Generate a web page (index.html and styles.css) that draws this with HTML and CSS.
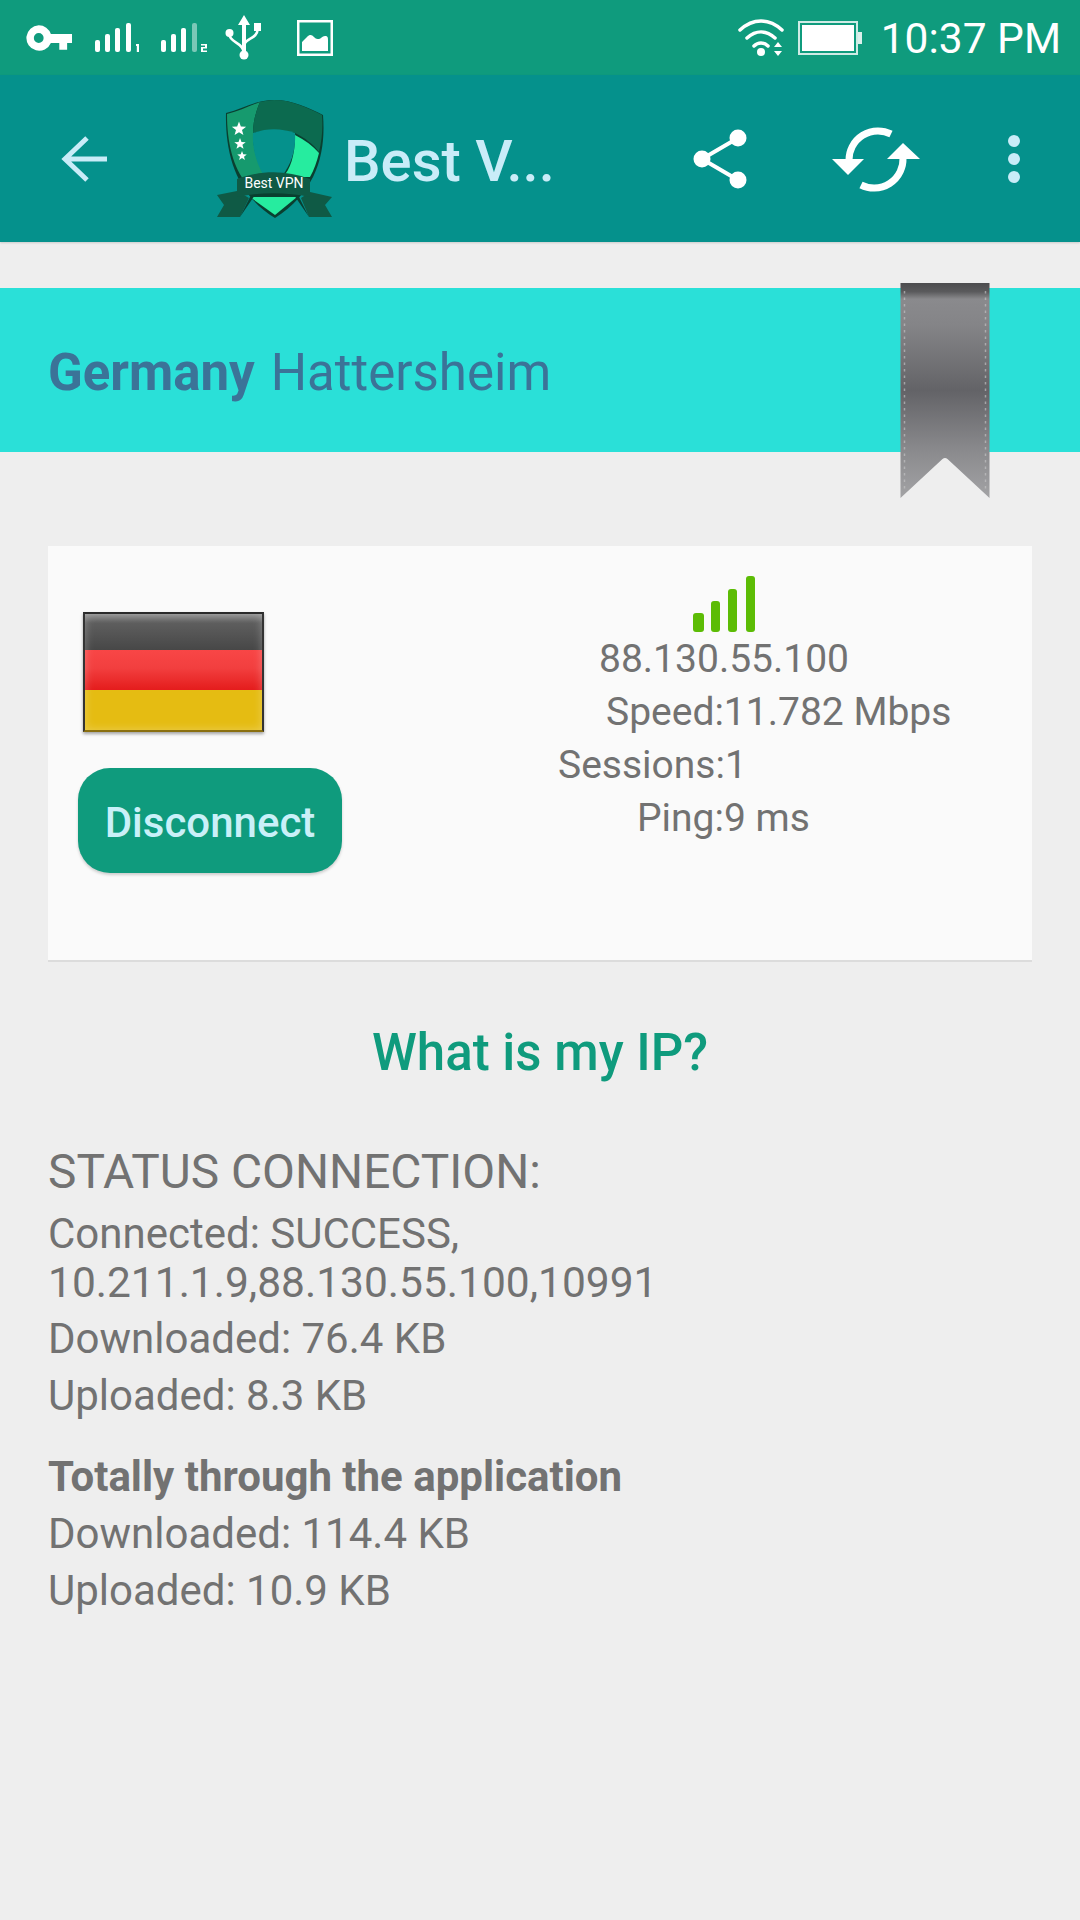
FILE: index.html
```html
<!DOCTYPE html>
<html lang="en">
<head>
<meta charset="utf-8">
<title>Best VPN</title>
<link rel="stylesheet" href="styles.css">
</head>
<body>
<div class="screen">
  <header class="statusbar">
    <svg class="ic-key" viewBox="0 0 48 26"><path fill="#fff" d="M13 0a13 13 0 0 1 12.4 9H47v9h-5v7h-8v-7h-8.600A13 13 0 1 1 13 0zm0 8a5 5 0 1 0 0 10 5 5 0 0 0 0-10z"/></svg>
    <svg class="ic-sig" viewBox="0 0 46 30"><g fill="#fff"><rect x="0" y="17" width="5" height="12" rx="2"/><rect x="10" y="11" width="5" height="18" rx="2"/><rect x="20" y="5" width="5" height="24" rx="2"/><rect x="31" y="0" width="5" height="29" rx="2"/><path d="M41 21h3v8h-2.200v-6H41z"/></g></svg>
    <svg class="ic-sig ic-sig2" viewBox="0 0 46 30"><g fill="#fff"><rect x="0" y="17" width="5" height="12" rx="2"/><rect x="10" y="11" width="5" height="18" rx="2"/><rect x="20" y="5" width="5" height="24" rx="2"/><rect x="31" y="0" width="5" height="29" rx="2" opacity=".45"/><path d="M40 21h6v4.500h-4v2h4V29h-6v-5h4v-1.500h-4z"/></g></svg>
    <svg class="ic-usb" viewBox="0 0 38 46"><g fill="#fff"><path d="M19 0l6 10h-4v26h-4V10h-4z"/><circle cx="19" cy="40" r="4.500"/><circle cx="4.500" cy="18" r="4"/><rect x="29" y="8" width="7" height="8"/></g><g fill="none" stroke="#fff" stroke-width="2.500"><path d="M4.500 20c0 7 14 8 14 17"/><path d="M32.500 15c0 9-13 8-13 15"/></g></svg>
    <svg class="ic-img" viewBox="0 0 36 36"><rect x="1.250" y="1.250" width="33.500" height="33.500" fill="none" stroke="#fff" stroke-width="2.500"/><path fill="#fff" d="M5 31V22l5-5c3-3 5-2 7 0s3 2 5 2 3-3 6-3 3 2 3 4v11z"/></svg>
    <div class="status-right">
      <svg class="ic-wifi" viewBox="0 0 46 38"><g fill="none" stroke="#fff" stroke-width="3.500" stroke-linecap="round"><path d="M2 11c13-12 29-12 42 0"/><path d="M9 19c9-8 19-8 28 0"/><path d="M16 27c4-4 10-4 14 0"/></g><circle cx="23" cy="33" r="4" fill="#fff"/><path fill="#fff" d="M40 23l4 5h-8zM40 37l-4-5h8z"/></svg>
      <svg class="ic-bat" viewBox="0 0 64 34"><rect x="1" y="1" width="58" height="32" fill="none" stroke="#fff" stroke-opacity=".8" stroke-width="2"/><rect x="4" y="4" width="52" height="26" fill="#fff"/><rect x="60" y="11" width="4" height="12" fill="#fff" fill-opacity=".85"/></svg>
      <span class="clock">10:37 PM</span>
    </div>
  </header>

  <nav class="appbar">
    <svg class="ic-back" viewBox="0 0 48 48"><path fill="none" stroke="#c9ecf8" stroke-width="5" d="M47 24H4M27 3L5 24l22 21"/></svg>
    <svg class="logo" viewBox="0 0 115 118">
      <defs><path id="star" d="M0-1L.247-.34.951-.309.4.13.588.809 0 .42-.588.809-.4.13-.951-.309-.247-.34z"/></defs>
      <path fill="#0a3f30" d="M9 13C26 9 38 0 57 0s35 8 49 15c3 38-6 76-48 103C20 95 8 55 9 13z"/>
      <path fill="#169a6e" d="M10 14C22 11 32 6 43 2c-4 9-7 20-7 31 0 16 4 30 12 42L30 84C16 68 10 42 10 14z"/>
      <path fill="#0c6a4f" d="M43 2c5-1 10-2 14-2 18 0 34 8 48 15 1 13 0 25-3 37-6-8-14-14-24-19-13-4-28-4-42 0 0-11 3-22 7-31z"/>
      <path fill="#26ec9f" d="M78 35c10 5 18 11 24 18-2 8-5 17-9 24H66c7-8 12-20 12-42z"/>
      <path fill="#26ec9f" d="M33 97h47L58 115z"/>
      <path fill="#05918c" d="M36 33c14-5 28-5 42 0 1 16-3 30-13 43H47C39 62 35 48 36 33z"/>
      <g fill="#fff">
        <use href="#star" transform="translate(22 29) scale(7.500)"/>
        <use href="#star" transform="translate(23 44) scale(6)"/>
        <use href="#star" transform="translate(25 56) scale(5)"/>
      </g>
      <path fill="#0f5a45" d="M0 95l20-4 12 7-9 19H0l7-12zM115 97l-22-5-9 6 8 19h23l-7-12z"/>
      <path fill="#0a3f30" d="M23 117l10-20 5-2zM92 117l-10-20-5-2z"/>
      <path fill="#0f5a45" d="M20 79c24-9 49-9 73 0v18c-24-5-49-5-73 0z"/>
      <text class="logo-text" x="57" y="88" text-anchor="middle">Best VPN</text>
    </svg>
    <span class="app-title">Best V...</span>
    <svg class="ic-share" viewBox="0 0 54 60"><g fill="#fff"><circle cx="45" cy="9" r="8.500"/><circle cx="9" cy="30" r="8.500"/><circle cx="45" cy="51" r="8.500"/></g><path fill="none" stroke="#fff" stroke-width="4" d="M45 9L9 30l36 21"/></svg>
    <svg class="ic-sync" viewBox="0 0 88 66"><g fill="none" stroke="#fff" stroke-width="7"><path d="M59 8A29 29 0 0 0 17 34"/><path d="M29 59A29 29 0 0 0 71 32"/></g><path fill="#fff" d="M0 33h32L16 49zM55 33h33L71 17z"/></svg>
    <svg class="ic-more" viewBox="0 0 12 48"><g fill="#c9ecf8"><circle cx="6" cy="6" r="6"/><circle cx="6" cy="24" r="6"/><circle cx="6" cy="42" r="6"/></g></svg>
  </nav>

  <main class="content">
    <section class="banner">
      <span class="country">Germany</span> <span class="city">Hattersheim</span>
      <svg class="ribbon" viewBox="0 0 89 215">
        <defs>
          <linearGradient id="rib" x1="0" y1="0" x2="0" y2="1">
            <stop offset="0" stop-color="#4c4c4e"/><stop offset=".04" stop-color="#5a5a5c"/><stop offset=".075" stop-color="#8a8a8d"/><stop offset=".2" stop-color="#848487"/><stop offset=".5" stop-color="#636367"/><stop offset=".78" stop-color="#8a8a8d"/><stop offset="1" stop-color="#a3a3a5"/>
          </linearGradient>
        </defs>
        <path fill="url(#rib)" d="M0 0h89v215L47 176q-2.500-2-5 0L0 215z"/>
        <path fill="none" stroke="#c4c4c6" stroke-opacity=".65" stroke-width="1.500" stroke-dasharray="2.500 4" d="M4 8v198M85 8v198"/>
      </svg>
    </section>

    <section class="card">
      <div class="card-left">
        <div class="flag"><i class="stripe black"></i><i class="stripe red"></i><i class="stripe gold"></i></div>
        <button class="btn">Disconnect</button>
      </div>
      <div class="card-right">
        <svg class="ic-signal" viewBox="0 0 62 56"><g fill="#5cbc05"><rect x="0" y="37" width="11" height="19" rx="3"/><rect x="18" y="25" width="9" height="31" rx="3"/><rect x="35" y="13" width="9" height="43" rx="3"/><rect x="53" y="0" width="9" height="56" rx="3"/></g></svg>
        <div class="stat stat-ip">88.130.55.100</div>
        <div class="stat stat-speed">Speed:11.782 Mbps</div>
        <div class="stat stat-sessions">Sessions:1</div>
        <div class="stat stat-ping">Ping:9 ms</div>
      </div>
    </section>

    <h2 class="whatip">What is my IP?</h2>

    <section class="details">
      <h3 class="status-title">STATUS CONNECTION:</h3>
      <p class="conn">Connected: SUCCESS, <span class="conn-addr">10.211.1.9,88.130.55.100,10991</span></p>
      <p class="line">Downloaded: 76.4 KB</p>
      <p class="line">Uploaded: 8.3 KB</p>
      <p class="total">Totally through the application</p>
      <p class="line">Downloaded: 114.4 KB</p>
      <p class="line">Uploaded: 10.9 KB</p>
    </section>
  </main>
</div>
</body>
</html>
```
FILE: styles.css
```css
* { box-sizing: border-box; }
html, body { margin: 0; padding: 0; }
body { width: 1080px; height: 1920px; overflow: hidden; background: #eeeeee; font-family: Roboto, sans-serif; color: #727272; }
.screen { width: 1080px; height: 1920px; display: flex; flex-direction: column; }

.statusbar { height: 75px; flex: none; background: #0f9b7d; display: flex; align-items: center; padding: 0 19px 0 26px; }
.statusbar svg { display: block; flex: none; }
.ic-key { width: 47px; height: 26px; margin-right: 22px; }
.ic-sig { width: 46px; height: 30px; margin-right: 20px; }
.ic-sig2 { margin-right: 18px; }
.ic-usb { width: 38px; height: 46px; margin-right: 34px; }
.ic-img { width: 36px; height: 36px; }
.status-right { margin-left: auto; display: flex; align-items: center; }
.ic-wifi { width: 46px; height: 38px; margin-right: 14px; }
.ic-bat { width: 64px; height: 34px; margin-right: 19px; }
.clock { color: #fff; font-size: 42.500px; line-height: 75px; padding-top: 2px; white-space: nowrap; }

.appbar { height: 167px; flex: none; background: #05918c; display: flex; align-items: center; box-shadow: 0 1px 2px rgba(0,0,0,.15); }
.appbar svg { display: block; flex: none; }
.ic-back { width: 48px; height: 48px; margin-left: 60px; }
.logo { width: 115px; height: 118px; margin-left: 109px; }
.logo-text { fill: #fff; font: 400 14px Roboto, sans-serif; }
.app-title { flex: none; color: #c9ecf8; font-size: 58px; font-weight: 500; margin-left: 12px; padding-top: 4px; width: 226px; white-space: nowrap; }
.ic-share { width: 54px; height: 60px; margin-left: 123px; }
.ic-sync { width: 88px; height: 66px; margin-left: 85px; }
.ic-more { width: 12px; height: 48px; margin-left: 88px; }

.content { flex: 1; display: flex; flex-direction: column; padding-top: 46px; }
.banner { position: relative; height: 164px; background: #2ae0d8; display: flex; align-items: center; gap: 16px; padding: 4px 48px 0; font-size: 51px; color: #3b7398; }
.country { font-weight: 700; }
.ribbon { position: absolute; left: 900px; top: -5px; width: 90px; height: 215px; }

.card { margin: 94px 48px 0; height: 416px; background: #fafafa; border-bottom: 2px solid #dcdcdc; display: flex; }
.card-left { width: 510px; padding: 66px 0 0 30px; flex: none; }
.flag { position: relative; width: 181px; height: 120px; margin-left: 5px; display: flex; flex-direction: column; border: 2px solid #2a2a2a; border-bottom-color: #8a6f10; border-left-color: #333; border-right-color: #333; box-shadow: 0 2px 3px rgba(0,0,0,.35); }
.flag::after { content: ""; position: absolute; inset: 0; box-shadow: inset 0 0 10px rgba(255,255,255,.28); }
.stripe { display: block; }
.black { flex: 36; background: linear-gradient(#8a8a8a 0, #5e5e5e 25%, #474747 100%); }
.red { flex: 40; background: linear-gradient(#f84646, #f23f3f 45%, #e41c1c); }
.gold { flex: 40; background: #e5bc12; }
.btn { display: block; width: 264px; height: 105px; margin-top: 36px; border: 0; border-radius: 32px; background: #0f9b7d; color: #c9f0f8; font: 500 42px Roboto, sans-serif; box-shadow: 0 2px 3px rgba(0,0,0,.18); padding: 4px 0 0; }
.card-right { flex: 1; padding-top: 30px; }
.ic-signal { display: block; width: 62px; height: 56px; margin-left: 135px; }
.stat { font-size: 39px; line-height: 53px; white-space: nowrap; }
.stat-ip { margin-left: 41px; margin-top: 1px; }
.stat-speed { margin-left: 48px; }
.stat-sessions { margin-left: 0; }
.stat-ping { margin-left: 79px; }

.whatip { margin: 61px 0 0; text-align: center; color: #0f9b7d; font-size: 51px; font-weight: 500; line-height: 60px; }
.details { padding: 0 48px; margin-top: 59px; }
.status-title { margin: 0; font-size: 47.800px; font-weight: 400; line-height: 60px; }
.conn { margin: 7px 0 0; width: 660px; font-size: 42px; line-height: 49px; }
.conn-addr { font-size: 42.500px; }
.line { margin: 7px 0 0; font-size: 42px; line-height: 50px; }
.total { margin: 31px 0 0; font-size: 42px; line-height: 50px; font-weight: 700; }
```
